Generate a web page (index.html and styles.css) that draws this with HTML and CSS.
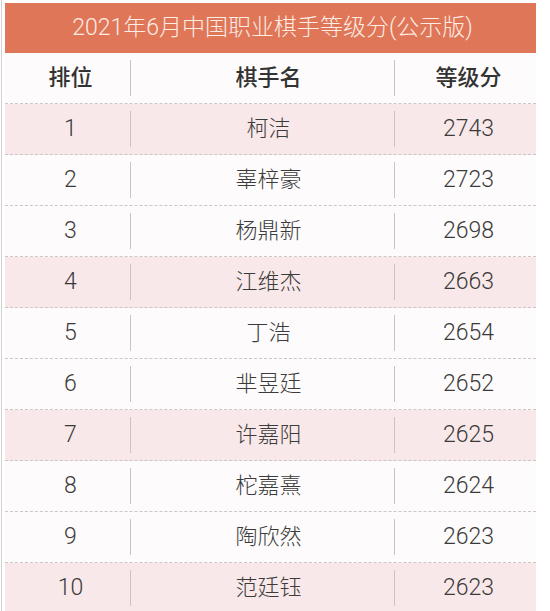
FILE: index.html
```html
<!DOCTYPE html>
<html lang="zh-CN">
<head>
<meta charset="utf-8">
<title>2021年6月中国职业棋手等级分</title>
<link rel="stylesheet" href="styles.css">
</head>
<body>
<div class="frame">
  <div class="table">
    <div class="title">2021年6月中国职业棋手等级分(公示版)</div>
    <div class="row head">
      <div class="c1">排位</div><span class="sep"></span><div class="c2">棋手名</div><span class="sep"></span><div class="c3">等级分</div>
    </div>
    <div class="row pink"><div class="c1 num">1</div><span class="sep"></span><div class="c2">柯洁</div><span class="sep"></span><div class="c3 num">2743</div></div>
    <div class="row"><div class="c1 num">2</div><span class="sep"></span><div class="c2">辜梓豪</div><span class="sep"></span><div class="c3 num">2723</div></div>
    <div class="row"><div class="c1 num">3</div><span class="sep"></span><div class="c2">杨鼎新</div><span class="sep"></span><div class="c3 num">2698</div></div>
    <div class="row pink"><div class="c1 num">4</div><span class="sep"></span><div class="c2">江维杰</div><span class="sep"></span><div class="c3 num">2663</div></div>
    <div class="row"><div class="c1 num">5</div><span class="sep"></span><div class="c2">丁浩</div><span class="sep"></span><div class="c3 num">2654</div></div>
    <div class="row"><div class="c1 num">6</div><span class="sep"></span><div class="c2">芈昱廷</div><span class="sep"></span><div class="c3 num">2652</div></div>
    <div class="row pink"><div class="c1 num">7</div><span class="sep"></span><div class="c2">许嘉阳</div><span class="sep"></span><div class="c3 num">2625</div></div>
    <div class="row"><div class="c1 num">8</div><span class="sep"></span><div class="c2">柁嘉熹</div><span class="sep"></span><div class="c3 num">2624</div></div>
    <div class="row"><div class="c1 num">9</div><span class="sep"></span><div class="c2">陶欣然</div><span class="sep"></span><div class="c3 num">2623</div></div>
    <div class="row pink"><div class="c1 num">10</div><span class="sep"></span><div class="c2">范廷钰</div><span class="sep"></span><div class="c3 num">2623</div></div>
  </div>
</div>
</body>
</html>
```
FILE: styles.css
```css
html, body {
  margin: 0;
  padding: 0;
  background: #ffffff;
}
.frame {
  margin-left: 1px;
  border-left: 1px solid #d2d2d2;
  padding: 3px 0 0 3px;
  height: 608px;
  overflow: hidden;
}
.table {
  width: 531px;
  font-family: Roboto, "Noto Sans CJK SC", sans-serif;
  color: #3b3b3b;
}
.title {
  height: 50px;
  background: #e07658;
  color: #fbece4;
  font-size: 23px;
  font-weight: 300;
  line-height: 50px;
  text-align: center;
  padding-left: 4px;
  box-sizing: border-box;
}
.row {
  display: grid;
  grid-template-columns: 125px 1px 263px 1px 141px;
  align-items: center;
  height: 50px;
  border-bottom: 1px dashed #cdc6c6;
  background: #fdfbfb;
  font-size: 22px;
  font-weight: 300;
  line-height: 30px;
}
.row.pink {
  background: #f9e8e9;
}
.row.head {
  font-weight: 500;
  color: #333333;
}
.sep {
  display: block;
  width: 1px;
  height: 36px;
  background: #c9c4c4;
}
.c1, .c2, .c3 {
  text-align: center;
}
.c1 { padding-left: 6px; }
.c2 { padding-left: 12px; }
.c3 { padding-left: 6px; }
.num {
  font-size: 23px;
  color: #3a3a3a;
}
```
